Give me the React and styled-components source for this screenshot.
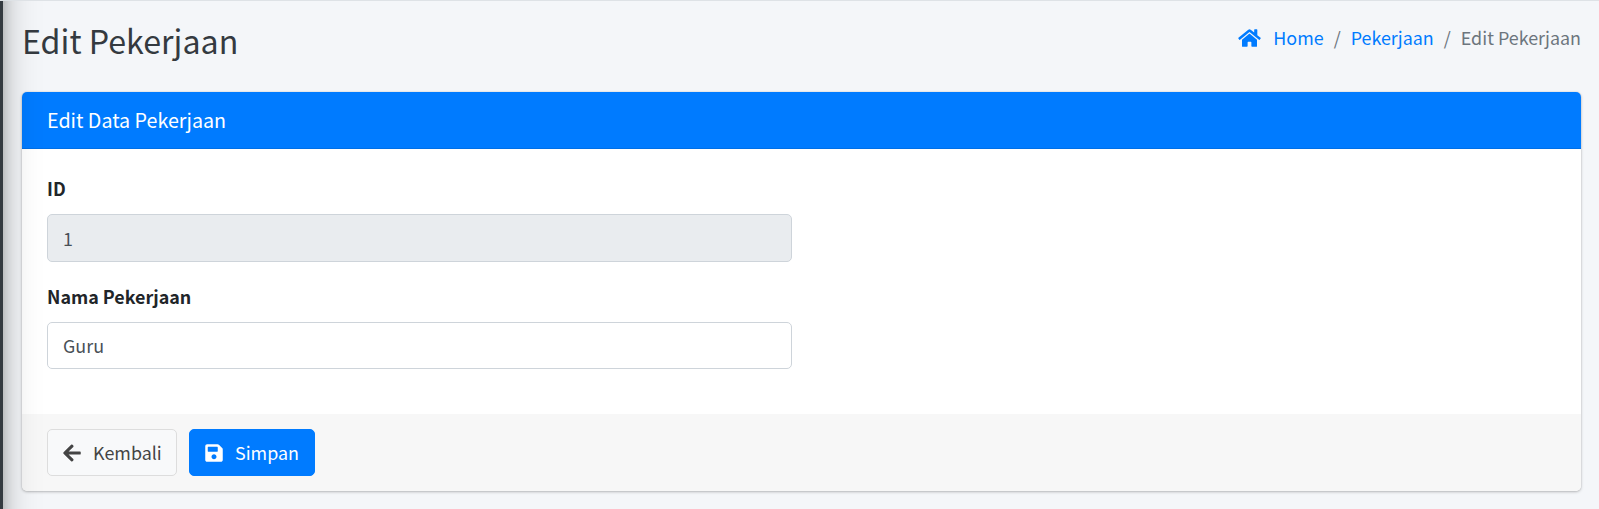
import React from "react";
import styled, { createGlobalStyle } from "styled-components";
import { FaHome, FaArrowLeft, FaSave } from "react-icons/fa";

const GlobalStyle = createGlobalStyle`
  *, *::before, *::after { box-sizing: border-box; }
  body {
    margin: 0;
    background: #f4f6f9;
    color: #212529;
    font-family: "Noto Sans CJK SC", "Noto Sans", sans-serif;
    font-size: 17.9px;
    line-height: 30px;
  }
`;

const Page = styled.div`
  position: relative;
  height: 509px;
  overflow: hidden;
  border-top: 1px solid #dee2e6;
  padding: 0 18px 0 22px;
`;

const SidebarEdge = styled.div`
  position: absolute;
  z-index: 2;
  top: -80px;
  bottom: -80px;
  left: -309px;
  width: 312px;
  background: #343a40;
  box-shadow: 0 17.5px 35px rgba(0, 0, 0, 0.25), 0 12.5px 12.5px rgba(0, 0, 0, 0.22);
  pointer-events: none;
`;

const ContentHeader = styled.header`
  display: flex;
  justify-content: space-between;
  align-items: flex-start;
  height: 91px;
  padding-top: 17px;
`;

const Title = styled.h1`
  margin: 0;
  font-size: 32.2px;
  font-weight: 400;
  line-height: 45px;
  color: #343a40;
`;

const Breadcrumb = styled.ol`
  display: flex;
  margin: 4px 0 0;
  padding: 0;
  list-style: none;
  color: #6c757d;
`;

const Crumb = styled.li`
  display: flex;
  & + &::before {
    content: "/";
    padding: 0 10px;
  }
`;

const CrumbLink = styled.a`
  display: flex;
  color: #007bff;
  text-decoration: none;
`;

const HomeIcon = styled(FaHome)`
  width: 23px;
  height: 20px;
  margin: 6px 12px 0 0;
`;

const Card = styled.section`
  background: #fff;
  height: 399px;
  border-radius: 5px;
  overflow: hidden;
  display: flex;
  flex-direction: column;
  box-shadow: 0 0 1px rgba(0, 0, 0, 0.25), 0 1px 3px rgba(0, 0, 0, 0.25);
`;

const CardHeader = styled.div`
  height: 57px;
  padding: 13px 25px 0;
  background: #007bff;
  border-bottom: 1px solid #006fe6;
  color: #fff;
  font-size: 19.7px;
`;

const CardBody = styled.div`
  flex: 1;
  padding: 24px 25px 0;
`;

const Field = styled.div`
  width: 745px;
  margin-bottom: 19px;
`;

const Label = styled.label`
  display: block;
  margin-bottom: 11px;
  font-weight: 700;
`;

const Input = styled.input`
  display: block;
  width: 100%;
  height: ${({ $height }) => $height}px;
  padding: 0 15px ${({ readOnly }) => (readOnly ? 0 : 2)}px;
  border: 1px solid #ced4da;
  border-radius: 5px;
  background: ${({ readOnly }) => (readOnly ? "#e9ecef" : "#fff")};
  color: #495057;
  font: inherit;
  outline: 0;
`;

const CardFooter = styled.div`
  display: flex;
  gap: 12px;
  height: 77px;
  padding: 15px 25px;
  background: #f7f7f7;
`;

const Button = styled.button`
  display: flex;
  align-items: center;
  gap: 12px;
  width: ${({ $width }) => $width}px;
  height: 47px;
  padding: 0 15px;
  border: 1px solid ${({ $primary }) => ($primary ? "#007bff" : "#ddd")};
  border-radius: 5px;
  background: ${({ $primary }) => ($primary ? "#007bff" : "#f8f9fa")};
  color: ${({ $primary }) => ($primary ? "#fff" : "#444")};
  font: inherit;
  white-space: nowrap;

  svg {
    flex: none;
    width: 18px;
    height: 20px;
  }
`;

const ButtonText = styled.span`
  padding-bottom: 2px;
`;

export default function App() {
  return (
    <>
      <GlobalStyle />
      <Page>
        <SidebarEdge />
        <ContentHeader>
          <Title>Edit Pekerjaan</Title>
          <Breadcrumb>
            <Crumb>
              <CrumbLink><HomeIcon />Home</CrumbLink>
            </Crumb>
            <Crumb><CrumbLink>Pekerjaan</CrumbLink></Crumb>
            <Crumb>Edit Pekerjaan</Crumb>
          </Breadcrumb>
        </ContentHeader>
        <Card>
          <CardHeader>Edit Data Pekerjaan</CardHeader>
          <CardBody>
            <Field>
              <Label htmlFor="id">ID</Label>
              <Input id="id" defaultValue="1" readOnly $height={48} />
            </Field>
            <Field>
              <Label htmlFor="nama">Nama Pekerjaan</Label>
              <Input id="nama" defaultValue="Guru" $height={47} />
            </Field>
          </CardBody>
          <CardFooter>
            <Button $width={130}>
              <FaArrowLeft />
              <ButtonText>Kembali</ButtonText>
            </Button>
            <Button $primary $width={126}>
              <FaSave />
              <ButtonText>Simpan</ButtonText>
            </Button>
          </CardFooter>
        </Card>
      </Page>
    </>
  );
}
